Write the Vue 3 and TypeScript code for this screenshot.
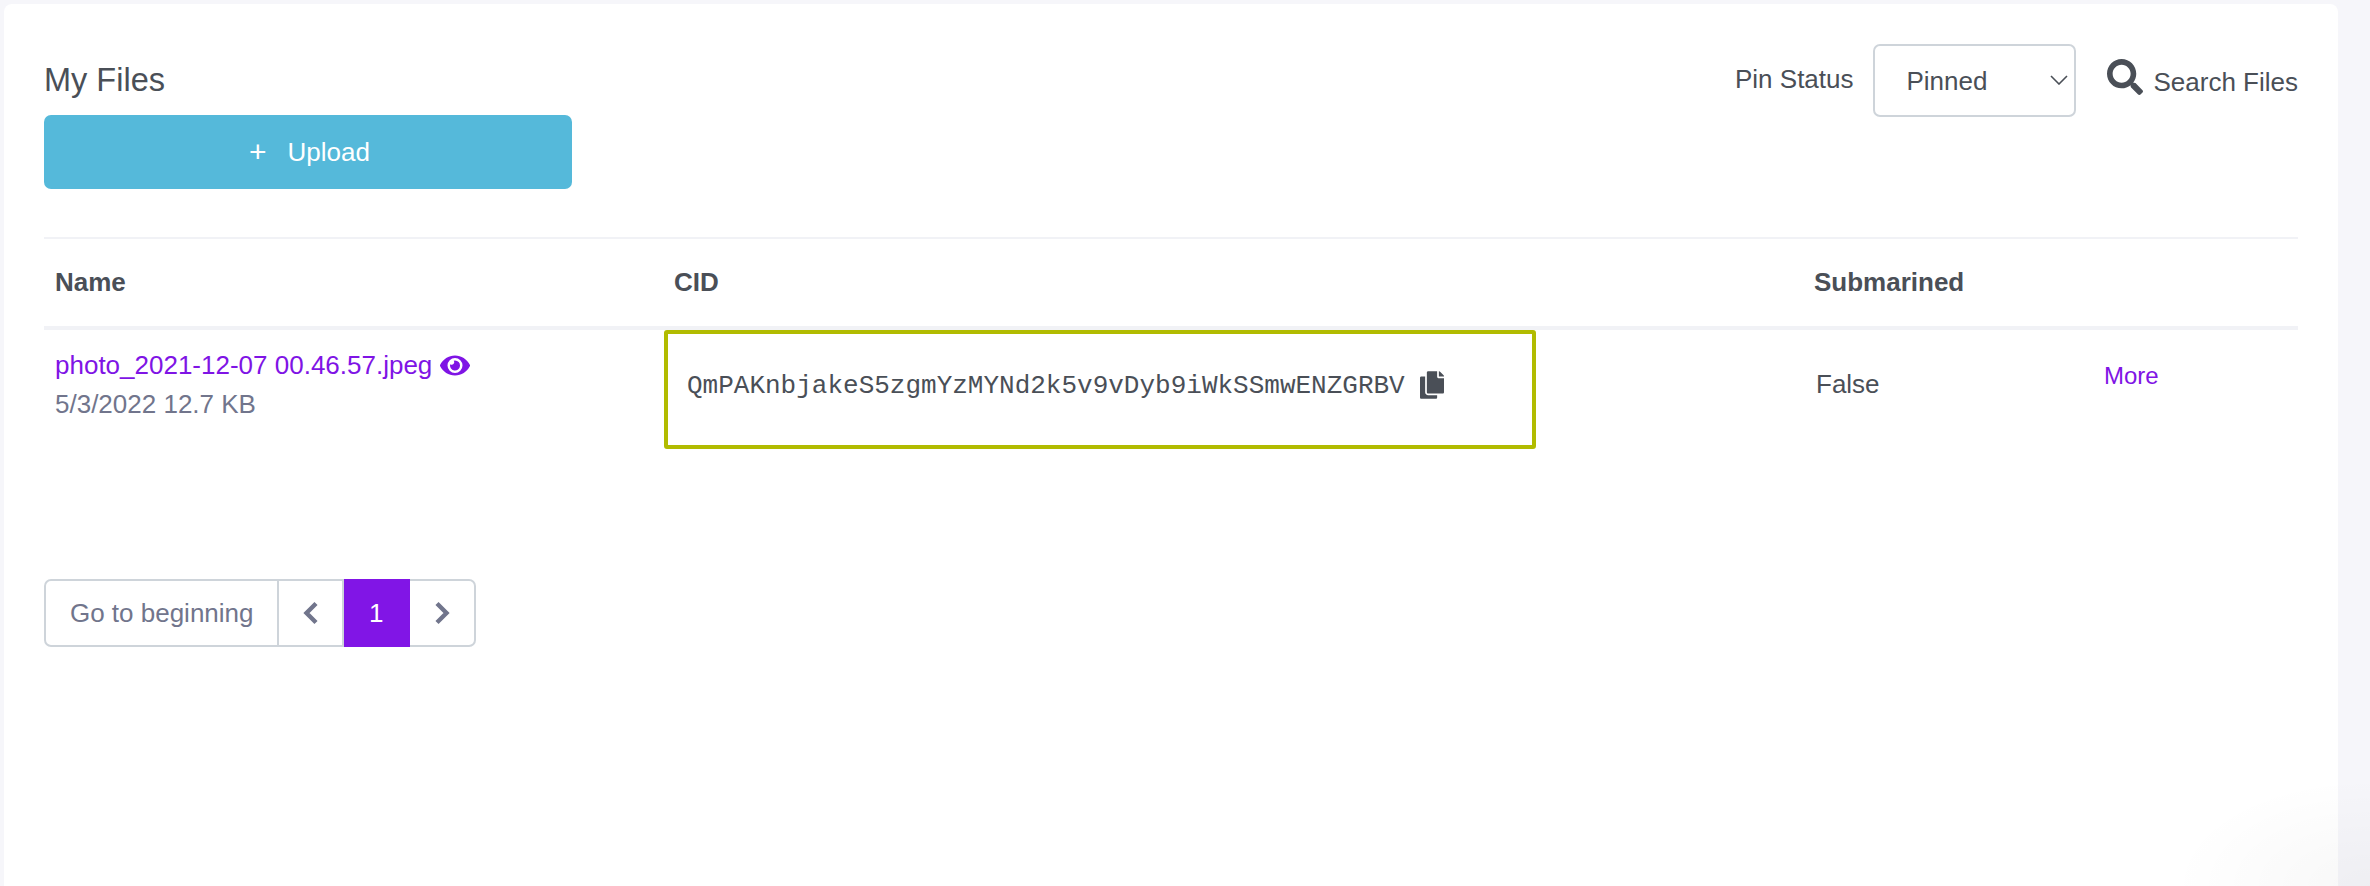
<template>
  <div class="page">
    <main class="card">
      <header class="top">
        <div class="top-left">
          <h1 class="title">My Files</h1>
          <button class="upload"><span class="plus">+</span>Upload</button>
        </div>
        <div class="filters">
          <label class="pin-label" for="pin">Pin Status</label>
          <div class="select-wrap">
            <select id="pin" v-model="pinStatus" class="select">
              <option v-for="opt in pinOptions" :key="opt" :value="opt">{{ opt }}</option>
            </select>
            <svg class="chevron" width="18" height="10" viewBox="0 0 18 10" fill="none" stroke="currentColor" stroke-width="1.6">
              <path d="M1 1l8 8 8-8" />
            </svg>
          </div>
          <button class="search">
            <svg width="36" height="36" viewBox="0 0 512 512" fill="currentColor">
              <path d="M505 442.7L405.3 343c-4.5-4.5-10.6-7-17-7H372c27.6-35.3 44-79.7 44-128C416 93.1 322.9 0 208 0S0 93.1 0 208s93.1 208 208 208c48.3 0 92.7-16.4 128-44v16.3c0 6.4 2.5 12.5 7 17l99.7 99.7c9.4 9.4 24.6 9.4 33.9 0l28.3-28.3c9.4-9.4 9.4-24.6.1-34zM208 336c-70.7 0-128-57.2-128-128 0-70.7 57.2-128 128-128 70.7 0 128 57.2 128 128 0 70.7-57.2 128-128 128z" />
            </svg>
            <span>Search Files</span>
          </button>
        </div>
      </header>

      <section class="table">
        <div class="row head">
          <div class="cell">Name</div>
          <div class="cell">CID</div>
          <div class="cell">Submarined</div>
          <div class="cell"></div>
        </div>
        <div v-for="file in files" :key="file.cid" class="row body">
          <div class="cell name-cell">
            <div class="file-name">
              <a class="link">{{ file.name }}</a>
              <svg class="eye" width="30" height="27" viewBox="0 0 576 512" fill="currentColor">
                <path d="M572.52 241.4C518.29 135.59 410.93 64 288 64S57.68 135.64 3.48 241.41a32.35 32.35 0 0 0 0 29.19C57.71 376.41 165.07 448 288 448s230.32-71.64 284.52-177.41a32.35 32.35 0 0 0 0-29.19zM288 400a144 144 0 1 1 144-144 143.93 143.93 0 0 1-144 144zm0-240a95.31 95.31 0 0 0-25.31 3.79 47.85 47.85 0 0 1-66.9 66.9A95.78 95.78 0 1 0 288 160z" />
              </svg>
            </div>
            <div class="file-meta">{{ file.date }} {{ file.size }}</div>
          </div>
          <div class="cid-col">
            <div class="cid-box">
              <span class="cid">{{ file.cid }}</span>
              <svg class="copy" width="24" height="28" viewBox="0 0 448 512" fill="currentColor">
                <path d="M320 448v40c0 13.255-10.745 24-24 24H24c-13.255 0-24-10.745-24-24V120c0-13.255 10.745-24 24-24h72v296c0 30.879 25.121 56 56 56h168zm0-344V0H152c-13.255 0-24 10.745-24 24v368c0 13.255 10.745 24 24 24h272c13.255 0 24-10.745 24-24V128H344c-13.2 0-24-10.8-24-24zm120.971-31.029L375.029 7.029A24 24 0 0 0 358.059 0H352v96h96v-6.059a24 24 0 0 0-7.029-16.97z" />
              </svg>
            </div>
          </div>
          <div class="cell sub-cell">{{ file.submarined }}</div>
          <div class="cell more-cell"><a class="link more">More</a></div>
        </div>
      </section>

      <nav class="pager">
        <button class="pg first">Go to beginning</button>
        <button class="pg arrow prev">
          <svg width="17" height="24" viewBox="0 0 17 24" fill="none" stroke="currentColor" stroke-width="4.4">
            <path d="M14 2.5L4.5 12l9.5 9.5" />
          </svg>
        </button>
        <button class="pg current">1</button>
        <button class="pg arrow last">
          <svg width="17" height="24" viewBox="0 0 17 24" fill="none" stroke="currentColor" stroke-width="4.4">
            <path d="M3 2.5l9.5 9.5L3 21.5" />
          </svg>
        </button>
      </nav>
    </main>
    <div class="corner"></div>
  </div>
</template>

<script setup lang="ts">
import { ref } from 'vue'

const pinOptions = ['Pinned', 'Unpinned', 'All']
const pinStatus = ref('Pinned')

const files = [
  {
    name: 'photo_2021-12-07 00.46.57.jpeg',
    date: '5/3/2022',
    size: '12.7 KB',
    cid: 'QmPAKnbjakeS5zgmYzMYNd2k5v9vDyb9iWkSSmwENZGRBV',
    submarined: 'False',
  },
]
</script>

<style>
html, body {
  margin: 0;
  overflow: hidden;
  background: #f6f6fa;
}
</style>

<style scoped>
.page {
  position: relative;
  height: 886px;
  padding: 4px 32px 0 4px;
  box-sizing: border-box;
  font-family: "Liberation Sans", Arial, sans-serif;
  font-size: 26px;
  color: #4a4f57;
  background: #f6f6fa;
  overflow: hidden;
}

.card {
  height: 882px;
  padding: 0 40px;
  box-sizing: border-box;
  background: #fff;
  border-radius: 8px 8px 0 0;
}

.top {
  display: flex;
  justify-content: space-between;
  align-items: flex-start;
  height: 235px;
  padding-top: 40px;
  box-sizing: border-box;
  border-bottom: 2px solid #f1f2f6;
}

.title {
  margin: 0;
  font-size: 32.5px;
  font-weight: 400;
  line-height: 60px;
  height: 71px;
  padding-top: 6px;
  box-sizing: border-box;
}

.upload {
  display: flex;
  align-items: center;
  justify-content: center;
  width: 528px;
  height: 74px;
  padding: 0 0 0 3px;
  border: none;
  border-radius: 7px;
  background: #55b9da;
  color: #fff;
  font: inherit;
}

.plus {
  font-size: 30px;
  font-weight: 300;
  margin-right: 21px;
  line-height: 1;
}

.filters {
  display: flex;
  align-items: flex-start;
}

.pin-label {
  line-height: 71px;
  margin-right: 19px;
}

.select-wrap {
  position: relative;
  width: 203px;
  height: 73px;
  margin-right: 31px;
}

.select {
  width: 100%;
  height: 100%;
  padding: 0 0 0 32px;
  border: 2px solid #ced4da;
  border-radius: 7px;
  background: #fff;
  color: inherit;
  font: inherit;
  appearance: none;
}

.chevron {
  position: absolute;
  right: 8px;
  top: 31px;
}

.search {
  display: flex;
  align-items: center;
  gap: 11px;
  height: 52px;
  margin-top: 7px;
  padding: 0;
  border: none;
  background: none;
  color: inherit;
  font: inherit;
}

.search span {
  padding-top: 10px;
}

.row {
  display: grid;
  grid-template-columns: 620px 1139px 290px 205px;
}

.head {
  height: 87px;
  border-bottom: 4px solid #f1f2f6;
  align-items: center;
  font-weight: 700;
}

.head .cell:nth-child(2) {
  padding-left: 10px;
}

.cell {
  padding: 0 11px;
}

.body {
  height: 119px;
}

.link {
  color: #7f14e5;
}

.file-name {
  display: flex;
  align-items: center;
  gap: 8px;
  margin-top: 17px;
  line-height: 36px;
  color: #7f14e5;
}

.file-meta {
  margin-top: 3px;
  line-height: 36px;
  color: #71758c;
}

.cid-box {
  display: flex;
  align-items: center;
  height: 119px;
  width: 872px;
  padding: 0 0 7px 19px;
  box-sizing: border-box;
  border: 4px solid #b1bb00;
  border-radius: 3px;
}

.cid {
  font-family: "Liberation Mono", monospace;
  font-size: 26px;
  color: #4a4f57;
}

.copy {
  margin: 0 0 2px 15px;
}

.sub-cell {
  padding: 36px 0 0 13px;
  line-height: 36px;
}

.more-cell {
  padding-top: 27px;
  line-height: 36px;
}

.more {
  font-size: 24px;
}

.pager {
  display: flex;
  width: 432px;
  height: 68px;
  margin-top: 130px;
}

.pg {
  display: flex;
  align-items: center;
  justify-content: center;
  height: 68px;
  padding: 0;
  background: #fff;
  color: #71758c;
  font: inherit;
  border: 2px solid #ced4da;
  border-left: none;
  box-sizing: border-box;
}

.first {
  width: 236px;
  border-left: 2px solid #ced4da;
  border-radius: 7px 0 0 7px;
}

.arrow {
  width: 66px;
}

.prev {
  width: 65px;
}

.current {
  width: 66px;
  background: #8115e6;
  border-color: #8115e6;
  color: #fff;
}

.last {
  border-radius: 0 7px 7px 0;
}

.corner {
  position: absolute;
  right: 0;
  bottom: 0;
  width: 200px;
  height: 110px;
  pointer-events: none;
  background: radial-gradient(ellipse at 100% 100%, rgba(0, 0, 0, 0.03), rgba(0, 0, 0, 0) 70%);
}
</style>
